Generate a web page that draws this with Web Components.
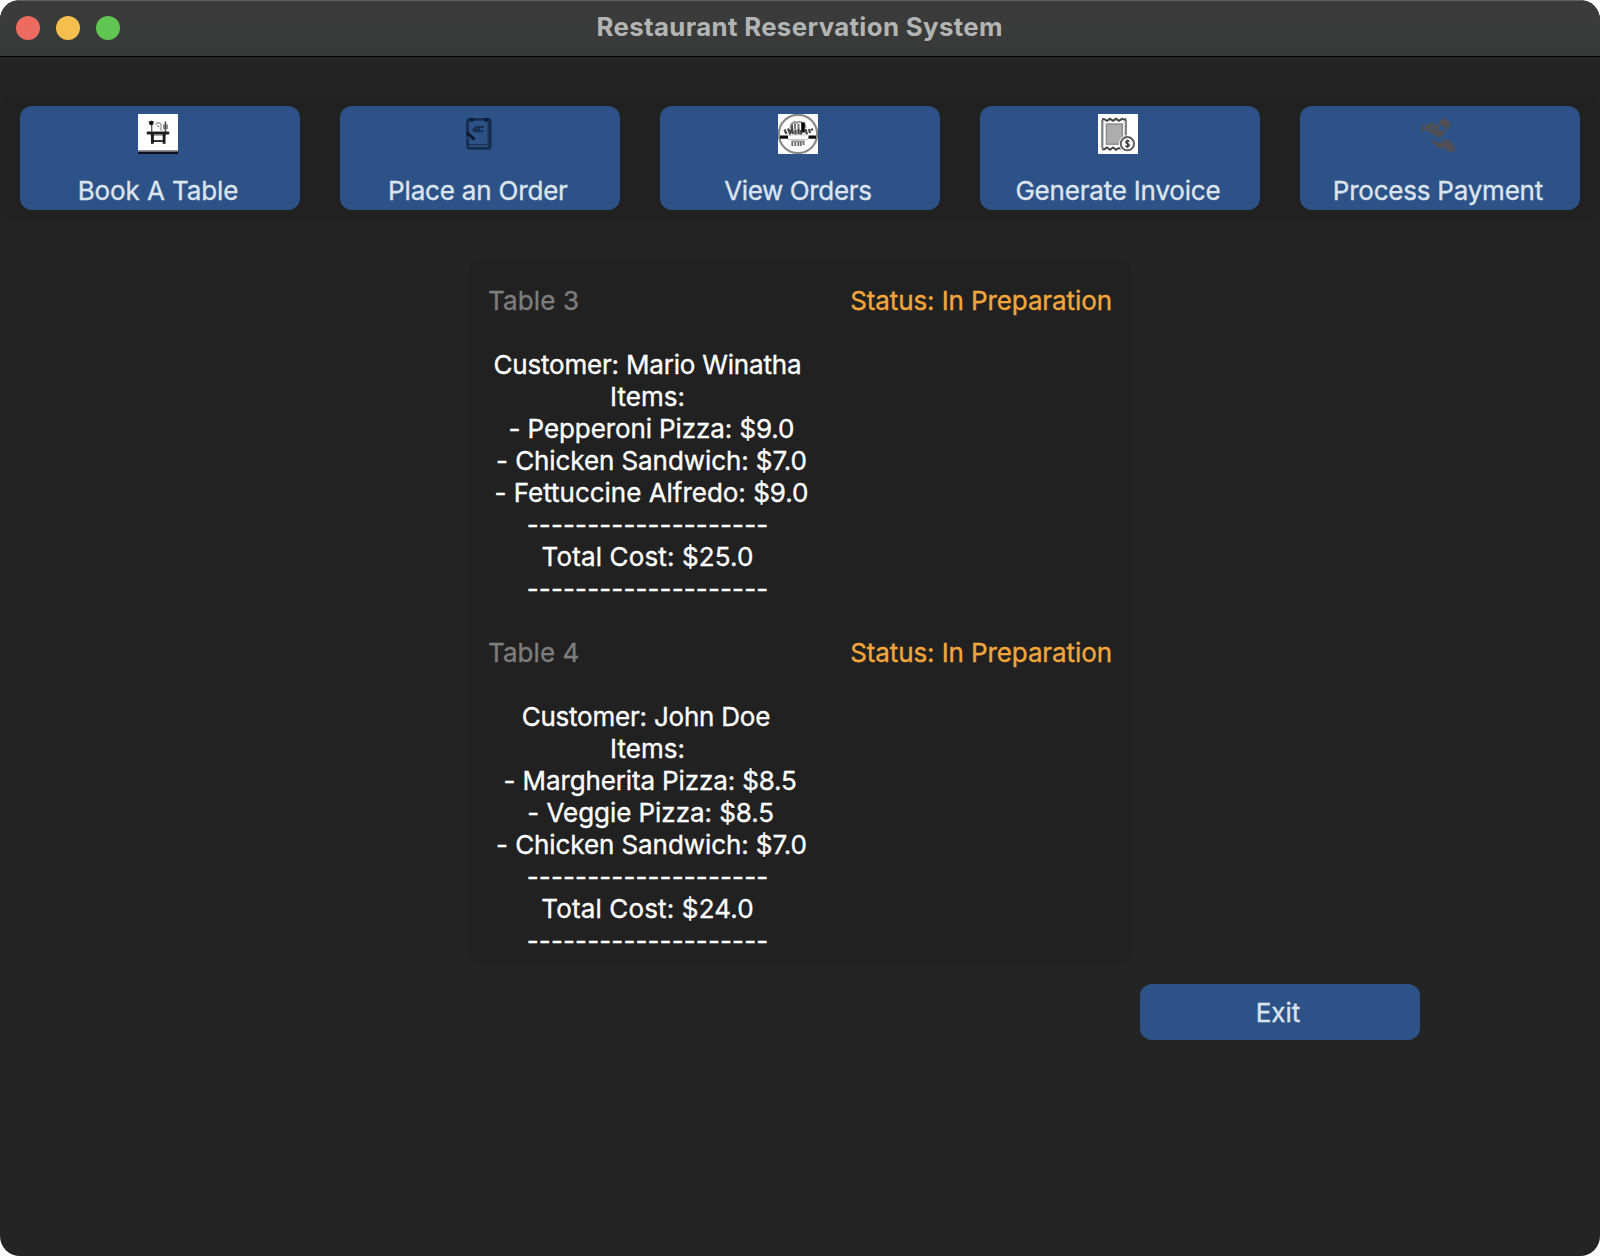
<!DOCTYPE html>
<html lang="en">
<head>
<meta charset="utf-8">
<title>Restaurant Reservation System</title>
<style>
html,body{margin:0;background:#fff}
body{font-family:Inter,"Liberation Sans",sans-serif;font-size:26px;line-height:32px;-webkit-text-stroke:.35px currentColor}
</style>
</head>
<body>
<app-window>
  <title-bar slot="title"><fit-text w="403.5">Restaurant Reservation System</fit-text></title-bar>
  <tool-bar slot="toolbar">
    <action-button icon="table"><fit-text w="157.5">Book A Table</fit-text></action-button>
    <action-button icon="note"><fit-text w="178">Place an Order</fit-text></action-button>
    <action-button icon="badge"><fit-text w="147">View Orders</fit-text></action-button>
    <action-button icon="invoice"><fit-text w="203">Generate Invoice</fit-text></action-button>
    <action-button icon="hands"><fit-text w="208">Process Payment</fit-text></action-button>
  </tool-bar>
  <order-list>
    <order-entry>
      <fit-text slot="table" w="89">Table 3</fit-text>
      <fit-text slot="status" w="259.5">Status: In Preparation</fit-text>
      <fit-text w="305.5">Customer: Mario Winatha</fit-text>
      <fit-text w="71.5">Items:</fit-text>
      <fit-text item w="283.5">- Pepperoni Pizza: $9.0</fit-text>
      <fit-text item w="308.5">- Chicken Sandwich: $7.0</fit-text>
      <fit-text item w="311.5">- Fettuccine Alfredo: $9.0</fit-text>
      <fit-text w="239.5">--------------------</fit-text>
      <fit-text w="209.5">Total Cost: $25.0</fit-text>
      <fit-text w="239.5">--------------------</fit-text>
    </order-entry>
    <order-entry>
      <fit-text slot="table" w="89.5">Table 4</fit-text>
      <fit-text slot="status" w="259.5">Status: In Preparation</fit-text>
      <fit-text w="246.5" style="margin-right:3px">Customer: John Doe</fit-text>
      <fit-text w="71.5">Items:</fit-text>
      <fit-text item w="291.5" style="margin-right:2.5px">- Margherita Pizza: $8.5</fit-text>
      <fit-text item w="245" style="margin-right:1.5px">- Veggie Pizza: $8.5</fit-text>
      <fit-text item w="308.5">- Chicken Sandwich: $7.0</fit-text>
      <fit-text w="239.5">--------------------</fit-text>
      <fit-text w="210">Total Cost: $24.0</fit-text>
      <fit-text w="239.5">--------------------</fit-text>
    </order-entry>
  </order-list>
  <action-button slot="footer"><fit-text w="42">Exit</fit-text></action-button>
</app-window>

<script>
const define = (name, html, init) => customElements.define(name, class extends HTMLElement {
  connectedCallback() {
    if (this.shadowRoot) return;
    this.attachShadow({mode: 'open'}).innerHTML = html;
    if (init) init(this);
  }
});

const svg = body => `<svg viewBox="0 0 40 40" width="40" height="40">${body}</svg>`;
const ICONS = {
  table: svg(`<rect width="40" height="40" fill="#fff"/>
    <g filter="url(#soft)" fill="none" stroke="#1c1c1c">
      <path d="M8.8 19H31.2" stroke-width="2.9"/><path d="M12.5 21H28" stroke="#555" stroke-width="1"/>
      <path d="M14.4 20V29.8M26.1 20V29.8" stroke-width="2.9"/>
      <path d="M14 27H27" stroke-width="1.8"/>
      <path d="M13.7 11V18" stroke="#555" stroke-width="1.3"/><circle cx="13.3" cy="9" r="1.9" fill="#111"/><path d="M10.5 7L11.5 8M16 7L15 8" stroke="#666"/>
      <path d="M27.4 7.5V18" stroke="#444" stroke-width="1.5"/><path d="M26 10.5V15M29 10.5V15" stroke="#666" stroke-width="1.5"/>
      <path d="M17.8 10.5Q20 7.5 22.3 9.5Q24.5 12.5 22 15.5M19 12L21.5 12.5M22.5 15.2L24.5 16.5" stroke="#999" stroke-width="1.3"/>
    </g><path d="M0 36.7H40" stroke="#8e8e9a" stroke-width="1.4"/><path d="M0 38.8H40" stroke="#10101c" stroke-width="2.4"/>`),
  note: svg(`<g filter="url(#soft)" fill="none" stroke="#172d50">
      <rect x="9.6" y="5.4" width="22.6" height="29" rx="2.5" stroke-width="2.8"/>
      <path d="M10 30.8H32M30.2 6V31" stroke-width="1.5" opacity=".8"/>
      <path d="M11 5.8H15.5M26 5.8H30.5" stroke="#0d1c38" stroke-width="3.4"/>
      <path d="M16.5 13H26M14.5 15.2H22M15 17.3H25.5" stroke-width="2"/>
      <path d="M8.8 18.5L16.5 25.5" stroke="#0a1529" stroke-width="3"/>
      <path d="M8.5 23L13 25.5" stroke="#29497a" stroke-width="1.5"/>
    </g>`),
  badge: svg(`<rect width="40" height="40" fill="#fff"/>
    <g filter="url(#soft)" fill="none" stroke="#555">
      <circle cx="20" cy="20" r="19.2" stroke="#8a8a8a" stroke-width="2.2"/>
      <path d="M12.5 14Q13 8.5 15.5 9Q17 6.5 19 9Q22 6.5 24 9Q27 8 27.5 14" stroke="#999" stroke-width="2"/>
      <path d="M14 10V15M17 9.5V15M20.5 10V15" stroke="#777" stroke-width="2"/>
      <path d="M25 8.5V18.5" stroke="#000" stroke-width="3.6"/>
      <path d="M6.5 15.5L8.5 20M10 14.5L12 19.5L14 14.5L15 20M17.5 15.5V21M20.5 15V20.5M23 16V21M27.5 15L29 20.5M31 15L32 19M33 16L35 15" stroke="#484848" stroke-width="2.3"/>
      <path d="M2 23.2H10M30.5 23.2H38" stroke="#0c0c0c" stroke-width="3.2"/>
      <path d="M10 20.9H30M10 25.5H30" stroke="#c4c4c4" stroke-width="1"/>
      <path d="M14.3 27V32M17.3 27V32M20.3 27V32M22.8 27V32M25.5 27V31" stroke="#707070" stroke-width="1.8"/>
      <path d="M13.5 27.2H27" stroke="#888" stroke-width="1.3"/>
    </g>`),
  invoice: svg(`<rect width="40" height="40" fill="#fff"/>
    <g filter="url(#soft)" fill="none" stroke="#444">
      <path d="M4.3 6V34M27.8 6V24" stroke="#7d7d7d" stroke-width="2.2"/>
      <path d="M4 5.3L6.5 5.2L9 6.8L12 4.8L15 6.8L18 4.8L21 6.8L24 4.8L26 5.4L28.3 5.3M4 35.3L6.5 35.2L9 33.5L12 35.7L15 33.5L18 35.7L21 34L23 34.8" stroke-width="2"/>
      <rect x="8.4" y="10" width="16" height="20.2" fill="#adadad" stroke="#8b8b8b" stroke-width="1.4"/>
      <circle cx="29.4" cy="29.7" r="8.5" fill="#fff" stroke="none"/>
      <circle cx="29.4" cy="29.7" r="6.6" stroke="#606060" stroke-width="2"/>
      <path d="M31.4 27.5Q29.2 25.8 27.9 27.8Q27.7 29.2 29.6 29.7Q31.8 30.4 30.9 32Q29.2 33.5 27.4 31.7M29.5 25.5V34" stroke-width="1.5"/>
    </g>`),
  hands: svg(`<g filter="url(#soft)" fill="#4f5054">
      <path d="M4 10.5L6 10.3V18L4 18ZM7 10.8L13 9L17.5 10.5L18.5 14L16 17L18.5 20L16.5 21.2L12 18L7 17.4Z"/>
      <path fill-rule="evenodd" d="M25.5 3.3L33.7 10L21.5 25L14.5 19L18.5 15.3L18 12ZM23.5 11.6A2.7 2.7 0 1 0 23.6 17A2.7 2.7 0 0 0 23.5 11.6Z"/>
      <path d="M11.5 14L15 15.5M13.5 12L17 13" stroke="#3b5277" stroke-width="1"/>
      <path d="M12.2 25.8L15.5 26L20 29L26.5 28.5L22.5 26.2L28 25.3L33.5 28L37.8 36.8L30 37.9L28 34.2L20 33.7Z"/>
    </g>`)
};
const SOFT = `<svg width="0" height="0" style="position:absolute"><filter id="soft"><feGaussianBlur stdDeviation="0.75"/></filter></svg>`;

define('app-window', `<style>
  :host{display:flex;flex-direction:column;width:1600px;height:1256px;box-sizing:border-box;background:#242424;border-radius:20px;overflow:hidden}
  .bar{padding-top:39px}
  main{display:flex;justify-content:center;padding-top:40px}
  footer{display:flex;justify-content:flex-end;padding:20px 180px 0 0}
  </style><slot name="title"></slot><div class="bar"><slot name="toolbar"></slot></div>
  <main><slot></slot></main><footer><slot name="footer"></slot></footer>`);

define('title-bar', `<style>
  :host{display:grid;grid-template-columns:1fr auto 1fr;align-items:center;height:57px;box-sizing:border-box;padding:0 0 0 16px;
    background:linear-gradient(#3a3b3a,#383a39);border-top:1.5px solid #606261;border-bottom:1px solid #000;color:#b3b5b4;font-weight:700;-webkit-text-stroke:0}
  .lights{display:flex;gap:16px;padding-bottom:1px}
  i{width:24px;height:24px;border-radius:50%}
  .name{margin:-4px 17px 0 0;font-size:25.8px}
  </style><div class="lights"><i style="background:#ed6a5f"></i><i style="background:#f5bf4f"></i><i style="background:#61c554"></i></div>
  <div class="name"><slot></slot></div><span></span>`);

define('tool-bar', `<style>
  :host{display:flex;gap:40px;padding:10px 20px;background:#212121;border-radius:12px}
  </style><slot></slot>`);

define('action-button', `<style>
  :host{display:flex;flex-direction:column;align-items:center;justify-content:space-between;width:280px;height:104px;box-sizing:border-box;
    padding:8px 4px 3px 0;background:#2d5288;border-radius:12px;color:#dce4ee}
  :host(:not([icon])){height:56px;justify-content:center;padding:1px 4px 0 0}
  .pic{width:40px;height:40px} .pic:empty{display:none}
  .pic svg{display:block}
  </style>${SOFT}<div class="pic"></div><slot></slot>`, el => {
  el.shadowRoot.querySelector('.pic').innerHTML = ICONS[el.getAttribute('icon')] || '';
});

define('order-list', `<style>
  :host{display:flex;flex-direction:column;width:664px;height:704px;box-sizing:border-box;background:#212121;border-radius:12px}
  </style><slot></slot>`);

define('order-entry', `<style>
  :host{display:block;height:352px;box-sizing:border-box;padding:25px 20px 0}
  header{display:flex;justify-content:space-between;height:64px}
  .t{color:#7d7d7d}.s{color:#f3a73b}
  .lines{display:flex;flex-direction:column;align-items:center;width:319px;color:#fff}
  ::slotted([item]){padding-left:8px}
  </style><header><span class="t"><slot name="table"></slot></span><span class="s"><slot name="status"></slot></span></header>
  <div class="lines"><slot></slot></div>`);

// Tracks a line of text so that its inked width equals the "w" attribute.
define('fit-text', `<style>:host{display:block;height:32px;white-space:nowrap}span{display:inline-block}</style><span><slot></slot></span>`, el => {
  const text = el.textContent, cs = getComputedStyle(el);
  const ctx = document.createElement('canvas').getContext('2d');
  ctx.font = `${cs.fontWeight} ${cs.fontSize} ${cs.fontFamily}`;
  const m = ctx.measureText(text);
  const ink = m.actualBoundingBoxRight + m.actualBoundingBoxLeft;
  const ls = (el.getAttribute('w') - ink) / (text.length - 1);
  const span = el.shadowRoot.querySelector('span');
  span.style.letterSpacing = ls + 'px';
  span.style.marginRight = -ls + 'px';
});
</script>
</body>
</html>
